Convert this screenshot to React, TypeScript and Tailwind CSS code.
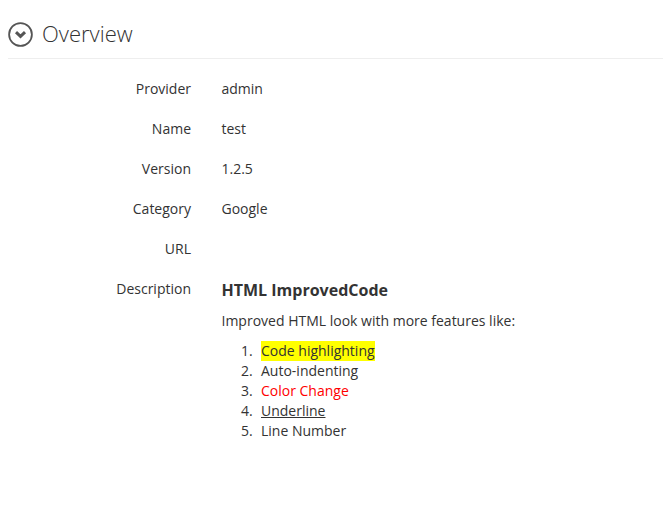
const items = [
  { n: "1.", el: <span className="bg-[#ffff00]">Code highlighting</span> },
  { n: "2.", el: <span>Auto-indenting</span> },
  { n: "3.", el: <span className="text-[#ff0000]">Color Change</span> },
  { n: "4.", el: <span className="underline">Underline</span> },
  { n: "5.", el: <span>Line Number</span> },
];

export default function App() {
  const rows: [string, string][] = [["Provider","admin"],["Name","test"],["Version","1.2.5"],["Category","Google"],["URL",""]];
  return (
    <div className="w-[665px] h-[518px] bg-white text-[14px] leading-[20px] text-[#333] font-['Open_Sans',sans-serif] overflow-hidden">
      <div className="ml-2 mr-[2px] h-[59px] border-b border-[#eee] flex items-center pt-[10px] gap-[9px]">
        <svg width="25" height="25" viewBox="0 0 25 25" fill="none">
          <circle cx="12.5" cy="12.5" r="11.4" stroke="#555" strokeWidth="1.8" />
          <path d="M8 10.2 L12.5 14.4 L17 10.2" stroke="#555" strokeWidth="3" />
        </svg>
        <div className="text-[22px] leading-[30px] font-light text-[#333] mb-[2px]">Overview</div>
      </div>
      <div className="pt-5 flex flex-col">
        {rows.map(([k,v]) => (
          <div key={k} className="flex h-[40px]">
            <div className="w-[191px] text-right">{k}</div>
            <div className="ml-[30.5px]">{v}</div>
          </div>
        ))}
        <div className="flex">
          <div className="w-[191px] text-right">Description</div>
          <div className="ml-[30.5px]">
            <div className="text-[16px] leading-[22px] font-bold">HTML ImprovedCode</div>
            <p className="mt-[10px]">Improved HTML look with more features like:</p>
            <ol className="mt-[10px] pl-[19.5px]">
              {items.map((it) => (
                <li key={it.n} className="flex">
                  <span className="w-[20px] shrink-0">{it.n}</span>
                  {it.el}
                </li>
              ))}
            </ol>
          </div>
        </div>
      </div>
    </div>
  );
}
